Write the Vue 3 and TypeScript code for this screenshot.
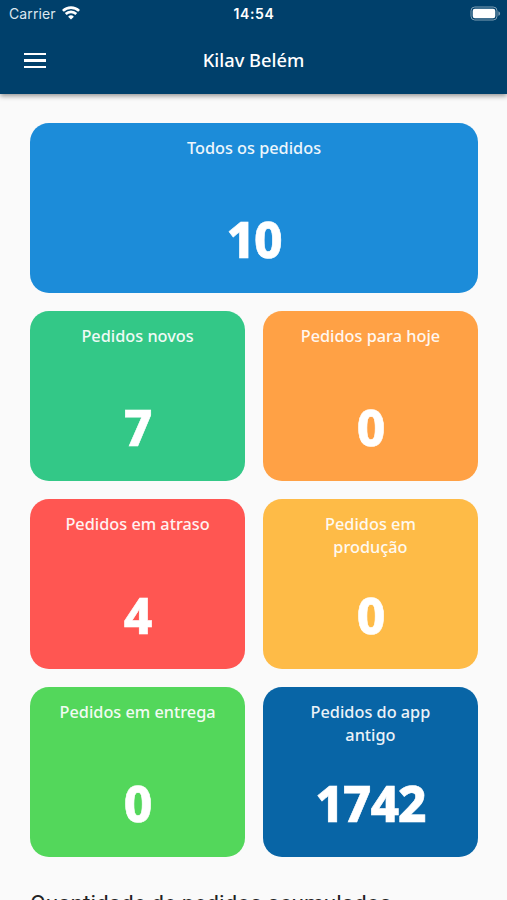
<script setup lang="ts">
interface OrderCard {
  title: string
  count: number
  tone: string
}

const cards: OrderCard[] = [
  { title: 'Todos os pedidos', count: 10, tone: 'all' },
  { title: 'Pedidos novos', count: 7, tone: 'new' },
  { title: 'Pedidos para hoje', count: 0, tone: 'today' },
  { title: 'Pedidos em atraso', count: 4, tone: 'late' },
  { title: 'Pedidos em produção', count: 0, tone: 'production' },
  { title: 'Pedidos em entrega', count: 0, tone: 'delivery' },
  { title: 'Pedidos do app antigo', count: 1742, tone: 'legacy' },
]
</script>

<template>
  <div class="screen">
    <header class="header">
      <div class="status">
        <div class="carrier">
          <span>Carrier</span>
          <svg class="wifi" viewBox="0 0 18 14" aria-hidden="true">
            <path d="M0.9 4.9a11.6 11.6 0 0 1 16.2 0" />
            <path d="M3.7 8a7.6 7.6 0 0 1 10.6 0" />
            <path class="dot" d="M9 13.6 6.1 10.7a4.2 4.2 0 0 1 5.8 0z" />
          </svg>
        </div>
        <span class="time">14:54</span>
        <svg class="battery" viewBox="0 0 31 15" aria-hidden="true">
          <rect class="shell" x="1" y="1" width="26" height="13" rx="3.8" />
          <rect class="charge" x="2.7" y="2.8" width="22.6" height="9.4" rx="2.2" />
          <path class="tip" d="M28.4 5.2v4.6c1-.4 1.7-1.3 1.7-2.3s-.7-1.9-1.7-2.3z" />
        </svg>
      </div>
      <div class="appbar">
        <button class="menu" type="button" aria-label="Menu">
          <span></span><span></span><span></span>
        </button>
        <h1>Kilav Belém</h1>
      </div>
    </header>
    <main class="content">
      <section class="grid">
        <article v-for="card in cards" :key="card.tone" class="card" :class="card.tone">
          <h2>{{ card.title }}</h2>
          <strong>{{ card.count }}</strong>
        </article>
      </section>
      <h3 class="chart-title">Quantidade de pedidos acumulados</h3>
    </main>
  </div>
</template>

<style>
body {
  margin: 0;
  background: #fafafa;
}
</style>

<style scoped>
.screen {
  height: 900px;
  overflow: hidden;
  background: #fafafa;
  font-family: 'Noto Sans', 'Open Sans', sans-serif;
}
.header {
  position: relative;
  height: 94px;
  background: #00406b;
  color: #fff;
  box-shadow: 0 2px 5px rgba(0, 0, 0, 0.42);
}
.status {
  display: grid;
  grid-template-columns: 1fr auto 1fr;
  align-items: center;
  height: 27px;
  padding: 0 6px 0 9px;
  box-sizing: border-box;
  font-family: Inter, sans-serif;
  font-size: 14px;
}
.carrier {
  display: flex;
  align-items: center;
  gap: 6px;
  color: #dce7ef;
  letter-spacing: 0.1px;
}
.wifi {
  width: 18px;
  height: 14px;
  margin-top: -1px;
  fill: none;
  stroke: #fff;
  stroke-width: 2.6;
}
.wifi .dot {
  fill: #fff;
  stroke: none;
}
.time {
  margin-right: 2px;
  font-weight: 600;
  letter-spacing: 0.6px;
}
.battery {
  justify-self: end;
  width: 31px;
  height: 15px;
}
.shell {
  fill: none;
  stroke: #7f9fb5;
}
.charge {
  fill: #fff;
}
.tip {
  fill: #7f9fb5;
}
.appbar {
  display: grid;
  grid-template-columns: 24px 1fr 24px;
  align-items: center;
  height: 67px;
  padding: 0 23px;
}
.menu {
  display: grid;
  gap: 4px;
  width: 24px;
  padding: 0 1px;
  border: 0;
  background: none;
}
.menu span {
  height: 2.3px;
  background: #fff;
}
h1 {
  margin: 0;
  padding-bottom: 1px;
  text-align: center;
  font-size: 18.3px;
  font-weight: 550;
  line-height: 26px;
}
.content {
  padding: 29.3px 29.3px 0 30.3px;
}
.grid {
  display: grid;
  grid-template-columns: 1fr 1fr;
  grid-auto-rows: 169.6px;
  gap: 18.4px;
}
.card {
  display: flex;
  flex-direction: column;
  align-items: center;
  justify-content: space-between;
  box-sizing: border-box;
  padding: 13.5px 28px 19px;
  border-radius: 19px;
  color: #fff;
}
.card h2 {
  margin: 0;
  text-align: center;
  font-size: 16.3px;
  font-weight: 540;
  line-height: 23.3px;
  opacity: 0.92;
}
.card strong {
  font-size: 49.5px;
  font-weight: 800;
  line-height: 70px;
  letter-spacing: -1px;
  -webkit-text-stroke: 0.6px #fff;
}
.all {
  grid-column: 1 / -1;
  background: #1c8cd9;
}
.new {
  background: #33c887;
}
.today {
  background: #ffa145;
}
.late {
  background: #ff5652;
}
.production {
  background: #febb47;
}
.delivery {
  background: #53d75b;
}
.legacy {
  background: #0865a6;
}
.chart-title {
  margin: 32px 0 0;
  color: #222;
  font-family: Roboto, sans-serif;
  font-size: 22.6px;
  font-weight: 400;
  line-height: 30px;
  white-space: nowrap;
}
</style>
